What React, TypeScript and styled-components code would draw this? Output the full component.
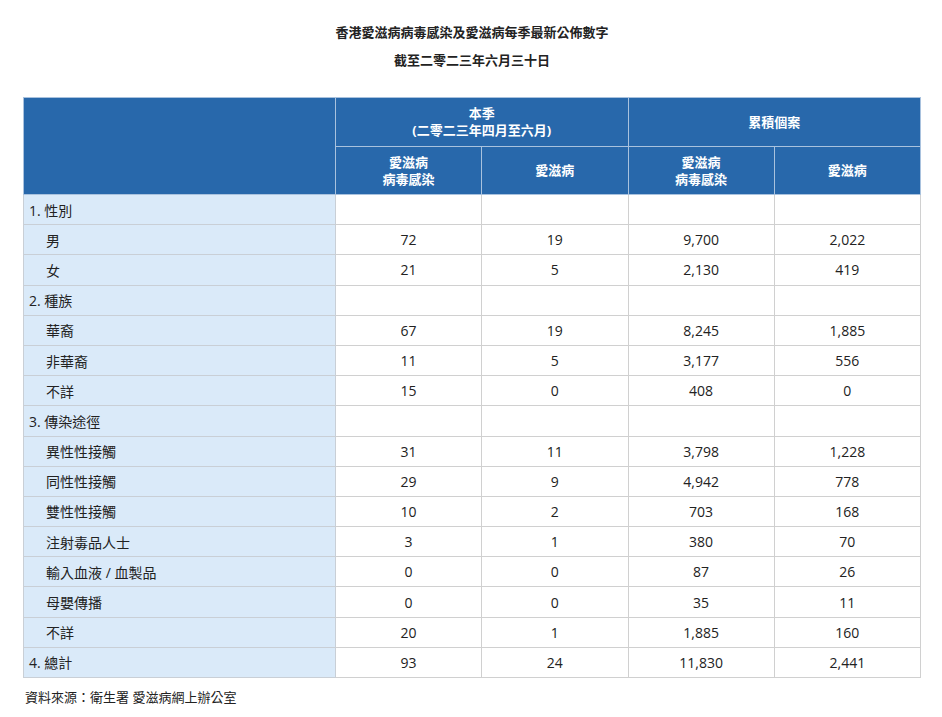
import React from "react";
import styled, { createGlobalStyle } from "styled-components";

const Global = createGlobalStyle`
  body { margin: 0; background: #fff; font-family: "Open Sans", "Noto Sans CJK TC", sans-serif; color: #222; }
`;

const Page = styled.div`
  padding: 20px 21px 0 23px;
`;
const Title = styled.div`
  text-align: center;
  font-size: 13px;
  line-height: 24px;
  font-weight: 600;
  color: #222;
`;
const Sub = styled(Title)`
  margin-top: 4px;
  margin-bottom: 25px;
`;
const Table = styled.table`
  width: 898px;
  border-collapse: collapse;
  table-layout: fixed;
  font-size: 14px;
`;
const Th = styled.th<{ $h: number }>`
  background: #2868ab;
  color: #fff;
  font-size: 13px;
  font-weight: 700;
  line-height: 17px;
  height: ${(p) => p.$h}px;
  padding: 0;
  border: 1px solid #a9c2de;
  text-align: center;
`;
const Label = styled.td<{ $indent: boolean }>`
  background: #daeaf9;
  border: 1px solid #c9cfd6;
  height: 29.2px;
  padding: 0 0 0 ${(p) => (p.$indent ? 22 : 5)}px;
  font-size: 14px;
`;
const Num = styled.td`
  border: 1px solid #d0d0d0;
  text-align: center;
  height: 29.2px;
  padding: 0;
`;
const Footer = styled.div`
  font-size: 13px;
  margin-top: 9px;
  margin-left: 2px;
`;

type Row = [string, boolean, string[]?];
const rows: Row[] = [
  ["1. 性別", false],
  ["男", true, ["72", "19", "9,700", "2,022"]],
  ["女", true, ["21", "5", "2,130", "419"]],
  ["2. 種族", false],
  ["華裔", true, ["67", "19", "8,245", "1,885"]],
  ["非華裔", true, ["11", "5", "3,177", "556"]],
  ["不詳", true, ["15", "0", "408", "0"]],
  ["3. 傳染途徑", false],
  ["異性性接觸", true, ["31", "11", "3,798", "1,228"]],
  ["同性性接觸", true, ["29", "9", "4,942", "778"]],
  ["雙性性接觸", true, ["10", "2", "703", "168"]],
  ["注射毒品人士", true, ["3", "1", "380", "70"]],
  ["輸入血液 / 血製品", true, ["0", "0", "87", "26"]],
  ["母嬰傳播", true, ["0", "0", "35", "11"]],
  ["不詳", true, ["20", "1", "1,885", "160"]],
  ["4. 總計", false, ["93", "24", "11,830", "2,441"]],
];

export default function App() {
  return (
    <>
      <Global />
      <Page>
        <Title>香港愛滋病病毒感染及愛滋病每季最新公佈數字</Title>
        <Sub>截至二零二三年六月三十日</Sub>
        <Table>
          <colgroup>
            <col style={{ width: 312 }} />
            <col /><col /><col /><col />
          </colgroup>
          <thead>
            <tr>
              <Th $h={48} rowSpan={2}></Th>
              <Th $h={48} colSpan={2}>本季<br />(二零二三年四月至六月)</Th>
              <Th $h={48} colSpan={2}>累積個案</Th>
            </tr>
            <tr>
              <Th $h={47}>愛滋病<br />病毒感染</Th>
              <Th $h={47}>愛滋病</Th>
              <Th $h={47}>愛滋病<br />病毒感染</Th>
              <Th $h={47}>愛滋病</Th>
            </tr>
          </thead>
          <tbody>
            {rows.map(([l, ind, v], i) => (
              <tr key={i}>
                <Label $indent={ind}>{l}</Label>
                {[0, 1, 2, 3].map((j) => (
                  <Num key={j}>{v ? v[j] : ""}</Num>
                ))}
              </tr>
            ))}
          </tbody>
        </Table>
        <Footer>資料來源：衛生署 愛滋病網上辦公室</Footer>
      </Page>
    </>
  );
}
